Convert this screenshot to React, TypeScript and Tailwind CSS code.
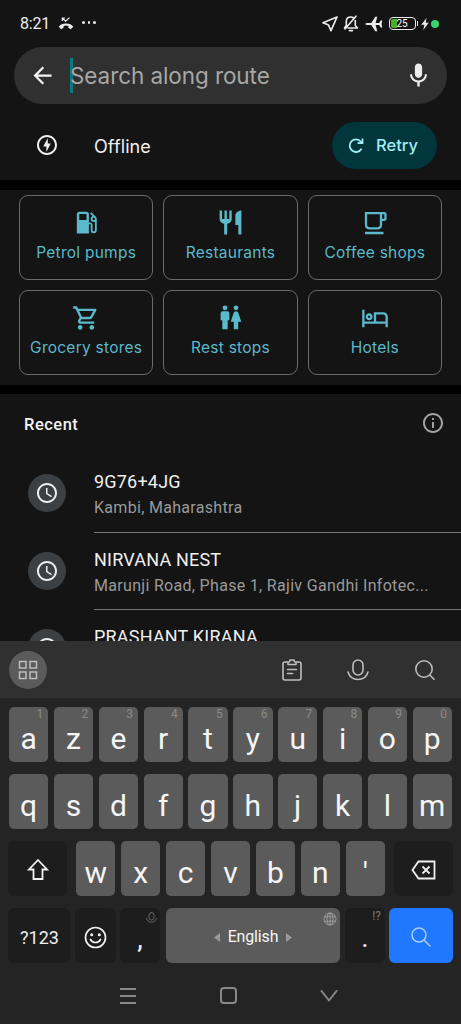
import React from "react";
import {
  MdArrowBack,
  MdMic,
  MdOutlineOfflineBolt,
  MdLocalGasStation,
  MdRestaurant,
  MdOutlineShoppingCart,
  MdOutlineHotel,
  MdSchedule,
  MdOutlineInfo,
} from "react-icons/md";

function StatusBar() {
  return (
    <div className="flex h-[47px] shrink-0 items-center pl-[20px] pr-[22px] text-[#ececec]">
      <span className="w-[38px] text-[16px] leading-none tracking-[-0.2px]">8:21</span>
      <svg className="h-[16px] w-[16px]" viewBox="0 0 16 16" fill="none">
        <path d="M8 7.6C4.700 7.6 2.300 8.800.7 10.700L3.300 13.200L5.600 11.800V9.900Q8 9.200 10.400 9.900V11.800L12.700 13.200L15.300 10.700C13.700 8.800 11.300 7.600 8 7.600Z" fill="currentColor" />
        <path d="M4.300 5V2H7.200M4.500 2.200L7.600 5.200L11.500 1.600" stroke="currentColor" strokeWidth="1.200" />
      </svg>
      <div className="mb-[2px] ml-[8px] flex gap-[3px]">
        <i className="size-[2.500px] rounded-full bg-current" />
        <i className="size-[2.500px] rounded-full bg-current" />
        <i className="size-[2.500px] rounded-full bg-current" />
      </div>
      <svg className="ml-auto h-[16px] w-[16px]" viewBox="0 0 16 16" fill="none" stroke="currentColor" strokeWidth="1.700" strokeLinejoin="round">
        <path d="M15 1L1 6.800L6.500 9L9 14.700Z" />
      </svg>
      <svg className="ml-[5px] h-[17px] w-[16px]" viewBox="0 0 16 17" fill="none" stroke="currentColor" strokeWidth="1.600" strokeLinecap="round" strokeLinejoin="round">
        <path d="M1.500 13L3.300 10.500V6.500C3.300 3.800 5 2 7.800 2C8.800 2 9.800 2.300 10.600 2.900M12.300 5.500V10.500L14.500 13H5M6.500 15.600H9.500M2 14L13 1.200" />
      </svg>
      <svg className="ml-[6px] h-[16px] w-[18px]" viewBox="0 0 18 16" fill="currentColor">
        <path d="M.5 8Q.5 6.900 2 6.900H6.300L10.300.8H12.300L10.600 6.900H14.200L15.700 4.600H17.300L16.600 8L17.300 11.400H15.700L14.200 9.100H10.600L12.300 15.200H10.300L6.300 9.100H2Q.5 9.100.5 8Z" />
      </svg>
      <div className="ml-[6px] flex items-center">
        <div className="flex h-[13px] w-[27px] items-center rounded-[4px] border-[1.500px] border-[#ececec] p-px">
          <div className="h-full w-[6px] rounded-l-[2px] bg-[#4caf22]" />
          <span className="text-[10px] leading-none text-white">25</span>
        </div>
        <div className="ml-px h-[5px] w-[1.500px] bg-[#ececec]" />
      </div>
      <svg className="ml-[3px] h-[12px] w-[8px]" viewBox="0 0 8 12" fill="currentColor">
        <path d="M5.500 0L.3 6.800H3.400L2.300 12L7.700 4.800H4.700Z" />
      </svg>
      <i className="ml-[2px] size-[8px] rounded-full bg-[#36d36b]" />
    </div>
  );
}

type IconProps = { size: number };

function CupIcon({ size }: IconProps) {
  return (
    <svg width={size} height={size} viewBox="0 0 28 28" fill="none" stroke="currentColor" strokeWidth="2.300">
      <path d="M5 4.200H20V15.500Q20 19.300 16.200 19.300H8.800Q5 19.300 5 15.500ZM20 4.200H23Q24.500 4.200 24.500 5.700V9.300Q24.500 10.800 23 10.800H20M4 24H22.500" />
    </svg>
  );
}

function PeopleIcon({ size }: IconProps) {
  return (
    <svg width={size} height={size} viewBox="0 0 29 29" fill="currentColor">
      <circle cx="9" cy="4.800" r="2.400" />
      <path d="M6.700 8.200H11.300Q13.400 8.200 13.400 10.300V17.200H11.700V26.300H6.300V17.200H4.600V10.300Q4.600 8.200 6.700 8.200Z" />
      <circle cx="20" cy="4.800" r="2.400" />
      <path d="M20 8.200Q21.800 8.200 22.400 9.900L25.300 18.800H22.200V26.300H17.800V18.800H14.700L17.600 9.900Q18.200 8.200 20 8.200Z" />
    </svg>
  );
}

const categories = [
  { label: "Petrol pumps", Icon: MdLocalGasStation, size: 29 },
  { label: "Restaurants", Icon: MdRestaurant, size: 29 },
  { label: "Coffee shops", Icon: CupIcon, size: 28 },
  { label: "Grocery stores", Icon: MdOutlineShoppingCart, size: 28 },
  { label: "Rest stops", Icon: PeopleIcon, size: 29 },
  { label: "Hotels", Icon: MdOutlineHotel, size: 28 },
];

function Recent({ title, detail }: { title: string; detail: string }) {
  return (
    <div className="flex h-[77.500px] shrink-0 pl-[28px]">
      <div className="mt-[19px] flex size-[38px] shrink-0 items-center justify-center rounded-full bg-[#3c4043] text-[#ececec]">
        <MdSchedule size={24} />
      </div>
      <div className="ml-[28px] flex-1 border-b border-[#747474] pt-[15px]">
        <div className="whitespace-nowrap text-[18px] leading-[24px] tracking-[0.200px] text-[#f0f0f0]">{title}</div>
        <div className="mt-[3px] whitespace-nowrap text-[16px] leading-[22px] tracking-[0.310px] text-[#9a9a9a]">{detail}</div>
      </div>
    </div>
  );
}

function Key({ label, hint }: { label: string; hint?: string }) {
  return (
    <div className="relative flex h-[55px] w-[39.300px] shrink-0 items-center justify-center rounded-[5px] bg-[#5b5b5b] pt-[8px] text-[30px] leading-none text-[#f5f5f5]">
      {label}
      {hint && <span className="absolute right-[5px] top-[1px] text-[12px] leading-none text-[#8b8b8b]">{hint}</span>}
    </div>
  );
}

function MicOutline({ className }: { className: string }) {
  return (
    <svg className={className} viewBox="0 0 22 22" fill="none" stroke="currentColor" strokeWidth="1.600" strokeLinecap="round">
      <rect x="6" y="1" width="10" height="15" rx="5" />
      <path d="M1 13C2.500 18 6.500 20.500 11 20.500S19.500 18 21 13" />
    </svg>
  );
}

function Keyboard() {
  return (
    <div className="flex h-[383px] shrink-0 flex-col bg-[#242424]">
      <div className="flex h-[57px] shrink-0 items-center bg-[#303030] pl-[9px] pr-[26px] text-[#bdbdbd]">
        <div className="flex size-[38px] items-center justify-center rounded-full bg-[#5b5b5b]">
          <svg className="size-[20px]" viewBox="0 0 20 20" fill="none" stroke="currentColor" strokeWidth="1.500">
            <path d="M1.500 1.500H8V8H1.500ZM12 1.500H18.500V8H12ZM1.500 12H8V18.500H1.500ZM12 12H18.500V18.500H12Z" />
          </svg>
        </div>
        <svg className="ml-auto h-[22px] w-[20px]" viewBox="0 0 20 22" fill="none" stroke="currentColor" strokeWidth="1.600" strokeLinejoin="round" strokeLinecap="round">
          <path d="M6 3H3Q1 3 1 5V19Q1 21 3 21H17Q19 21 19 19V5Q19 3 17 3H14M6 5.500V3L7.500 2.800L8 1H12L12.500 2.800L14 3V5.500ZM5.500 10.500H14.500M5.500 14.500H10.500" />
        </svg>
        <MicOutline className="ml-[45px] size-[22px]" />
        <svg className="ml-[46px] size-[20px]" viewBox="0 0 20 20" fill="none" stroke="currentColor" strokeWidth="1.600" strokeLinecap="round">
          <circle cx="9" cy="9" r="8.200" />
          <path d="M14.800 15L19 19.200" />
        </svg>
      </div>
      <div className="mt-[9px] flex justify-between pl-[9px] pr-[9px]">
        {"azertyuiop".split("").map((k, i) => (
          <Key key={k} label={k} hint={String((i + 1) % 10)} />
        ))}
      </div>
      <div className="mt-[12px] flex justify-between pl-[9px] pr-[9px]">
        {"qsdfghjklm".split("").map((k) => (
          <Key key={k} label={k} />
        ))}
      </div>
      <div className="mt-[12px] flex justify-between px-[8px]">
        <div className="flex h-[55px] w-[59px] items-center justify-center rounded-[6px] bg-[#1d1d1d] pt-[2px] text-[#f0f0f0]">
          <svg className="h-[23px] w-[22px]" viewBox="0 0 22 22" fill="none" stroke="currentColor" strokeWidth="1.800">
            <path d="M11 1.500L20 11H15.500V20.500H6.500V11H2Z" />
          </svg>
        </div>
        <div className="flex w-[309px] justify-between">
          {"wxcvbn'".split("").map((k) => (
            <Key key={k} label={k} />
          ))}
        </div>
        <div className="flex h-[55px] w-[59px] items-center justify-center rounded-[6px] bg-[#1d1d1d] pt-[2px] text-[#f0f0f0]">
          <svg className="h-[20px] w-[25px]" viewBox="0 0 25 20" fill="none" stroke="currentColor" strokeWidth="1.800">
            <path d="M7.500 1.500H23.500V18.500H7.500L1.500 10ZM11.500 6.500L18.500 13.500M18.500 6.500L11.500 13.500" />
          </svg>
        </div>
      </div>
      <div className="mt-[12px] flex h-[55px] pl-[8px]">
        <div className="flex w-[62px] items-center justify-center rounded-[6px] bg-[#1d1d1d] pl-[1px] pt-[3px] text-[18px] text-[#f0f0f0]">?123</div>
        <div className="ml-[5px] flex w-[41px] items-center justify-center rounded-[6px] bg-[#1d1d1d] pt-[3px] text-[#f0f0f0]">
          <svg className="size-[23px]" viewBox="0 0 23 23" fill="none" stroke="currentColor" strokeWidth="1.700" strokeLinecap="round">
            <circle cx="11.500" cy="11.500" r="10" />
            <path d="M6.500 13.500C8.500 17.500 14.500 17.500 16.500 13.500" />
            <circle cx="7.700" cy="8.800" r=".7" fill="currentColor" />
            <circle cx="15.300" cy="8.800" r=".7" fill="currentColor" />
          </svg>
        </div>
        <div className="relative ml-[4px] flex w-[40px] items-center justify-center rounded-[6px] bg-[#1d1d1d] pt-[6px] text-[28px] text-[#f0f0f0]">
          ,
          <MicOutline className="absolute right-[3px] top-[4px] size-[11px] text-[#777777]" />
        </div>
        <div className="relative ml-[6px] flex w-[174px] items-center justify-center gap-[8px] rounded-[6px] bg-[#5b5b5b] pt-[3px] text-[16px] text-[#f5f5f5]">
          <svg className="h-[9px] w-[6px] text-[#999999]" viewBox="0 0 6 9"><path d="M6 0V9L0 4.500Z" fill="currentColor" /></svg>
          <span className="tracking-[-0.150px]">English</span>
          <svg className="h-[9px] w-[6px] text-[#999999]" viewBox="0 0 6 9"><path d="M0 0V9L6 4.500Z" fill="currentColor" /></svg>
          <svg className="absolute right-[3px] top-[4px] size-[14px] text-[#a0a0a0]" viewBox="0 0 14 14" fill="none" stroke="currentColor" strokeWidth=".9">
            <circle cx="7" cy="7" r="6" />
            <ellipse cx="7" cy="7" rx="3" ry="6" />
            <path d="M1.500 4.800H12.500M1.500 9.200H12.500M7 1V13" />
          </svg>
        </div>
        <div className="relative ml-[5px] flex w-[40px] items-center justify-center rounded-[6px] bg-[#1d1d1d] pt-[5px] text-[28px] text-[#f0f0f0]">
          .
          <span className="absolute right-[4px] top-[2px] text-[12px] leading-none text-[#777777]">!?</span>
        </div>
        <div className="ml-[4px] flex w-[64px] items-center justify-center rounded-[6px] bg-[#1f78ff] pt-[2px] text-[#a9ceff]">
          <svg className="size-[20px]" viewBox="0 0 20 20" fill="none" stroke="currentColor" strokeWidth="1.500" strokeLinecap="round">
            <circle cx="8" cy="8" r="7" />
            <path d="M13 13L19 19" />
          </svg>
        </div>
      </div>
      <div className="mt-[24px] flex items-center pl-[120px] text-[#898989]">
        <div className="flex w-[16px] flex-col gap-[5px]">
          <i className="h-[2px] bg-current" />
          <i className="h-[2px] bg-current" />
          <i className="h-[2px] bg-current" />
        </div>
        <div className="ml-[84px] size-[17px] rounded-[4px] border-2 border-current" />
        <svg className="ml-[83px] h-[12px] w-[18px]" viewBox="0 0 18 12" fill="none" stroke="currentColor" strokeWidth="2" strokeLinecap="round" strokeLinejoin="round">
          <path d="M1.500 1L9 10.500L16.500 1" />
        </svg>
      </div>
    </div>
  );
}

export default function App() {
  return (
    <div className="flex h-[1024px] w-[461px] flex-col overflow-hidden bg-[#141414] font-['Roboto',sans-serif]">
      <StatusBar />
      <div className="mx-[14px] flex h-[57px] shrink-0 items-center rounded-full bg-[#303030] pl-[15px] pr-[14px]">
        <MdArrowBack className="text-[#f2f2f2]" size={27} />
        <div className="ml-[14px] h-[35px] w-[3px] bg-[#087b80]" />
        <span className="-ml-[3px] pt-[2px] font-['Inter',sans-serif] text-[22.500px] leading-none tracking-[-0.080px] text-[#a7a7a7]">Search along route</span>
        <MdMic className="ml-auto text-[#ececec]" size={29} />
      </div>
      <div className="flex h-[76px] shrink-0 items-center pb-px pl-[35px] pr-[24px] pt-[7px] text-[#f0f0f0]">
        <MdOutlineOfflineBolt size={24} />
        <span className="ml-[35px] pt-[2px] font-['Inter',sans-serif] text-[18px] tracking-[0.100px]">Offline</span>
        <div className="ml-auto flex h-[47px] w-[105px] items-center rounded-full bg-[#00363c] pl-[16px] text-[#a1edf5]">
          <svg className="size-[17px]" viewBox="0 0 17 17" fill="none" stroke="currentColor" strokeWidth="1.800">
            <path d="M13.500 11.800A6.300 6.300 0 1 1 12.800 4.600L14.500 6M14.500 1.500V6.200H9.500" />
          </svg>
          <span className="ml-[11px] font-['Inter',sans-serif] text-[16.500px] font-medium">Retry</span>
        </div>
      </div>
      <div className="h-[10px] shrink-0 bg-black" />
      <div className="grid h-[195px] shrink-0 grid-cols-3 grid-rows-[85px_85px] gap-[10px] px-[19px] pt-[5px]">
        {categories.map(({ label, Icon, size }) => (
          <div key={label} className="flex flex-col items-center rounded-[9px] border border-[#6b6b6b] pt-[12px] text-[#5bb9cb]">
            <div className="flex h-[29px] items-center">
              <Icon size={size} />
            </div>
            <span className="mt-[5px] whitespace-nowrap font-['Inter',sans-serif] text-[15.500px] leading-[22px] tracking-[0.250px]">{label}</span>
          </div>
        ))}
      </div>
      <div className="h-[9px] shrink-0 bg-black" />
      <div className="flex min-h-0 flex-1 flex-col overflow-hidden">
        <div className="flex h-[61px] shrink-0 items-center justify-between pl-[24px] pr-[16px]">
          <span className="pt-[2px] text-[16.500px] font-medium tracking-[0.500px] text-[#f2f2f2]">Recent</span>
          <MdOutlineInfo className="mb-[4px] text-[#a2a2a2]" size={24} />
        </div>
        <Recent title="9G76+4JG" detail="Kambi, Maharashtra" />
        <Recent title="NIRVANA NEST" detail="Marunji Road, Phase 1, Rajiv Gandhi Infotec..." />
        <Recent title="PRASHANT KIRANA" detail="" />
      </div>
      <Keyboard />
    </div>
  );
}
